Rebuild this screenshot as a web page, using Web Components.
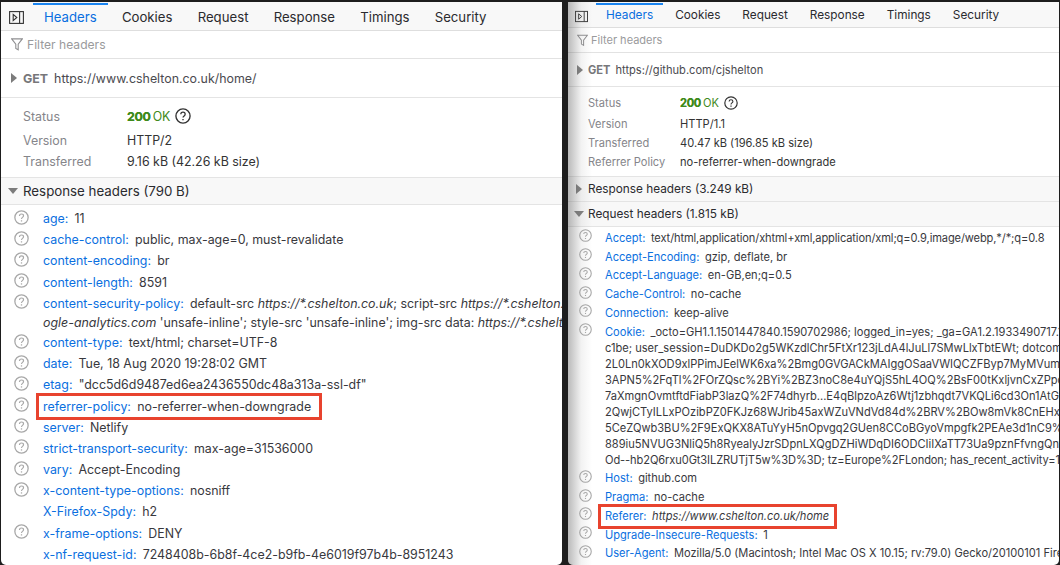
<!DOCTYPE html>
<html>
<head>
<meta charset="utf-8">
<title>Network headers</title>
<style>
  html, body { margin: 0; height: 100%; overflow: hidden; background: #1d1d1d; }
  body { font-family: Inter, "Liberation Sans", sans-serif; }
  #page { display: flex; height: 565px; padding: 2px 1px 0 1px; box-sizing: border-box; gap: 6px; }
  #left {
    flex: 0 0 561px;
    --fs: 12.4px; --tab-fs: 13.2px; --tab-gap: 25.2px; --tab-pad: 11px; --tab-h: 28px; --tab-top: 2px; --tabs-left: 32px; --toggle-w: 15px; --toggle-left: 8px;
    --filter-h: 27px; --filter-pad: 10px; --filter-gap: 4px; --filter-fs: 12.1px; --funnel: 12px;
    --req-h: 38px; --req-pad: 10px; --tri-gap: 6px; --method-gap: 6px;
    --status-pad: 4.5px 0 5.5px 22px; --label-w: 104px; --status-first: 27px; --status-row: 21px; --ok-gap: 2px; --help-gap: 5px;
    --head-h: 27px; --head-pad: 7px; --head-gap: 5px; --head-fs: 13.3px;
    --row-h: 21.2px; --line-h: 18px; --icon: 15px; --icon-left: 13px; --name-left: 42px; --rows-top: 3px;
  }
  #right {
    flex: 1; min-width: 0;
    --fs: 11.1px; --tab-fs: 11.8px; --tab-gap: 22px; --tab-pad: 10px; --tab-h: 25px; --tab-top: 1px; --tabs-left: 28px; --toggle-w: 13px; --toggle-left: 7px;
    --filter-h: 24px; --filter-pad: 9px; --filter-gap: 3px; --filter-fs: 11px; --funnel: 11px;
    --req-h: 33px; --req-pad: 9px; --tri-gap: 5px; --method-gap: 5px;
    --status-pad: 5px 0 4px 20px; --label-w: 92px; --status-first: 22px; --status-row: 19.3px; --ok-gap: 2px; --help-gap: 5px;
    --head-h: 25px; --head-pad: 6px; --head-gap: 4px; --head-fs: 11.8px;
    --row-h: 18.75px; --line-h: 16px; --icon: 13px; --icon-left: 11px; --name-left: 37px; --rows-top: 2px;
  }
  i { font-style: italic; }
</style>
</head>
<body>
<div id="page">
  <net-panel id="left">
    <panel-tabs></panel-tabs>
    <panel-filter></panel-filter>
    <request-line method="GET">https://www.cshelton.co.uk/home/</request-line>
    <status-block>
      <status-row label="Status" code="200">OK</status-row>
      <status-row label="Version">HTTP/2</status-row>
      <status-row label="Transferred">9.16 kB (42.26 kB size)</status-row>
    </status-block>
    <section-head open>Response headers (790 B)</section-head>
    <header-list>
      <header-row name="age">11</header-row>
      <header-row name="cache-control">public, max-age=0, must-revalidate</header-row>
      <header-row name="content-encoding">br</header-row>
      <header-row name="content-length">8591</header-row>
      <header-row name="content-security-policy">default-src <i>https://*.cshelton.co.uk</i>; script-src <i>https://*.cshelton.co.uk</i><span slot="more"><i>ogle-analytics.com</i> 'unsafe-inline'; style-src 'unsafe-inline'; img-src data: <i>https://*.cshelton.co.uk</i></span></header-row>
      <header-row name="content-type">text/html; charset=UTF-8</header-row>
      <header-row name="date">Tue, 18 Aug 2020 19:28:02 GMT</header-row>
      <header-row name="etag">"dcc5d6d9487ed6ea2436550dc48a313a-ssl-df"</header-row>
      <header-row name="referrer-policy" marked style="--mark-w: 286px">no-referrer-when-downgrade</header-row>
      <header-row name="server">Netlify</header-row>
      <header-row name="strict-transport-security">max-age=31536000</header-row>
      <header-row name="vary">Accept-Encoding</header-row>
      <header-row name="x-content-type-options">nosniff</header-row>
      <header-row name="X-Firefox-Spdy" noicon>h2</header-row>
      <header-row name="x-frame-options">DENY</header-row>
      <header-row name="x-nf-request-id" noicon>7248408b-6b8f-4ce2-b9fb-4e6019f97b4b-8951243</header-row>
    </header-list>
  </net-panel>

  <net-panel id="right" shaded>
    <panel-tabs></panel-tabs>
    <panel-filter></panel-filter>
    <request-line method="GET">https://github.com/cjshelton</request-line>
    <status-block>
      <status-row label="Status" code="200">OK</status-row>
      <status-row label="Version">HTTP/1.1</status-row>
      <status-row label="Transferred">40.47 kB (196.85 kB size)</status-row>
      <status-row label="Referrer Policy">no-referrer-when-downgrade</status-row>
    </status-block>
    <section-head>Response headers (3.249 kB)</section-head>
    <section-head open>Request headers (1.815 kB)</section-head>
    <header-list>
      <header-row name="Accept"><span style="letter-spacing: -.12px">text/html,application/xhtml+xml,application/xml;q=0.9,image/webp,*/*;q=0.8</span></header-row>
      <header-row name="Accept-Encoding">gzip, deflate, br</header-row>
      <header-row name="Accept-Language">en-GB,en;q=0.5</header-row>
      <header-row name="Cache-Control">no-cache</header-row>
      <header-row name="Connection">keep-alive</header-row>
      <header-row name="Cookie">_octo=GH1.1.1501447840.1590702986; logged_in=yes; _ga=GA1.2.1933490717.1590702986
        <span slot="more" style="margin-top: -1.5px">c1be; user_session=DuDKDo2g5WKzdlChr5FtXr123jLdA4lJuLl7SMwLlxTbtEWt; dotcom_user=cjshelton</span>
        <span slot="more">2L0Ln0kXOD9xlPPimJEelWK6xa%2Bmg0GVGACkMAIggOSaaVWIQCZFByp7MyMVum%2F</span>
        <span slot="more">3APN5%2FqTl%2FOrZQsc%2BYi%2BZ3noC8e4uYQjS5hL4OQ%2BsF00tKxljvnCxZPpde9</span>
        <span slot="more">7aXmgnOvmtftdFiabP3lazQ%2F74dhyrb...E4qBlpzoAz6Wtj1zbhqdt7VKQLi6cd3On1AtG1</span>
        <span slot="more">2QwjCTyILLxPOzibPZ0FKJz68WJrib45axWZuVNdVd84d%2BRV%2BOw8mVk8CnEHx94</span>
        <span slot="more">5CeZQwb3BU%2F9ExQKX8ATuYyH5nOpvgq2GUen8CCoBGyoVmpgfk2PEAe3d1nC9%2F</span>
        <span slot="more">889iu5NVUG3NliQ5h8RyealyJzrSDpnLXQgDZHiWDqDI6ODCIiIXaTT73Ua9pznFfvngQnv</span>
        <span slot="more" style="margin-bottom: 1.5px; letter-spacing: -.1px">Od--hb2Q6rxu0Gt3ILZRUTjT5w%3D%3D; tz=Europe%2FLondon; has_recent_activity=1</span>
      </header-row>
      <header-row name="Host">github.com</header-row>
      <header-row name="Pragma">no-cache</header-row>
      <header-row name="Referer" marked style="--mark-w: 239px"><i>https://www.cshelton.co.uk/home</i></header-row>
      <header-row name="Upgrade-Insecure-Requests">1</header-row>
      <header-row name="User-Agent">Mozilla/5.0 (Macintosh; Intel Mac OS X 10.15; rv:79.0) Gecko/20100101 Firefox/79.0</header-row>
    </header-list>
  </net-panel>
</div>

<script>
  const HELP_ICON = `<svg viewBox="0 0 14 14" fill="none" stroke="currentColor">
    <circle cx="7" cy="7" r="6.2" stroke-width="1.2"/>
    <path d="M5.1 5.5c0-1.1.8-1.8 1.9-1.8s1.9.7 1.9 1.7c0 1.5-1.9 1.5-1.9 3" stroke-width="1.1"/>
    <path d="M7 9.6v1.2" stroke-width="1.2"/>
  </svg>`;

  class NetPanel extends HTMLElement {
    constructor() {
      super();
      this.attachShadow({ mode: "open" }).innerHTML = `
        <style>
          :host {
            display: flex; flex-direction: column; position: relative; overflow: hidden;
            background: #fff; color: #2a2a2e; font-size: var(--fs);
            border-radius: 0 0 5px 5px; height: 563px;
          }
          :host([shaded])::before {
            content: ""; position: absolute; left: 0; top: 0; bottom: 0; width: 24px; z-index: 3;
            background: linear-gradient(90deg, rgba(90,90,90,.42), rgba(150,150,150,.12) 55%, rgba(255,255,255,0));
            pointer-events: none;
          }
        </style>
        <slot></slot>`;
    }
  }

  class PanelTabs extends HTMLElement {
    constructor() {
      super();
      const tabs = ["Headers", "Cookies", "Request", "Response", "Timings", "Security"];
      this.attachShadow({ mode: "open" }).innerHTML = `
        <style>
          :host {
            display: flex; flex: none; align-items: stretch; box-sizing: border-box; height: calc(var(--tab-h) + 1px);
            background: #f8f8f8; border-bottom: 1px solid #dedede; position: relative;
            padding-left: var(--tabs-left); font-size: var(--tab-fs);
          }
          svg { position: absolute; left: var(--toggle-left); top: 50%; margin-top: -5px; width: var(--toggle-w); height: 13px; color: #333; }
          .tab { display: flex; align-items: center; padding: var(--tab-top) var(--tab-pad) 0; margin-right: calc(var(--tab-gap) - 2 * var(--tab-pad)); color: #2a2a2e; white-space: nowrap; }
          .tab.on { color: #0a6fe0; background: linear-gradient(#f8f8f8 1px, #1a84f0 1px 3px, #f8f8f8 3px); }
        </style>
        <svg viewBox="0 0 15 13" fill="none" stroke="currentColor" stroke-width="1.1">
          <rect x=".6" y=".6" width="13.8" height="11.8"/>
          <path d="M10.6.6v11.8"/>
          <path d="M4.2 3.4l3.6 3.1-3.6 3.1z"/>
        </svg>
        ${tabs.map((t, i) => `<div class="tab${i === 0 ? " on" : ""}">${t}</div>`).join("")}`;
    }
  }

  class PanelFilter extends HTMLElement {
    constructor() {
      super();
      this.attachShadow({ mode: "open" }).innerHTML = `
        <style>
          :host {
            display: flex; flex: none; align-items: center; gap: var(--filter-gap); box-sizing: border-box;
            height: calc(var(--filter-h) + 1px); padding-left: var(--filter-pad); color: #9a9a9c;
            border-bottom: 1px solid #e2e2e2; font-size: var(--filter-fs);
          }
          svg { width: var(--funnel); height: 13px; flex: none; color: #8f8f91; }
        </style>
        <svg viewBox="0 0 12 13" fill="none" stroke="currentColor" stroke-width="1.1">
          <path d="M.7.9h10.6L7.2 6.2v5.6L4.8 10.4V6.2z"/>
        </svg>
        <span>Filter headers</span>`;
    }
  }

  class RequestLine extends HTMLElement {
    constructor() {
      super();
      this.attachShadow({ mode: "open" }).innerHTML = `
        <style>
          :host {
            display: flex; flex: none; align-items: center; box-sizing: border-box;
            height: calc(var(--req-h) + 1px); padding-left: var(--req-pad); color: #4a4a4f;
            border-bottom: 1px solid #e4e4e4;
          }
          .tri { width: 0; height: 0; border: 5px solid transparent; border-left: 6px solid #7c7c7c; border-right: 0; margin-right: var(--tri-gap); }
          b { color: #77777a; margin-right: var(--method-gap); }
        </style>
        <span class="tri"></span><b></b><slot></slot>`;
      this.shadowRoot.querySelector("b").textContent = this.getAttribute("method");
    }
  }

  class StatusBlock extends HTMLElement {
    constructor() {
      super();
      this.attachShadow({ mode: "open" }).innerHTML = `
        <style>
          :host { display: block; flex: none; padding: var(--status-pad); }
        </style>
        <slot></slot>`;
    }
  }

  class StatusRow extends HTMLElement {
    constructor() {
      super();
      const code = this.getAttribute("code");
      this.attachShadow({ mode: "open" }).innerHTML = `
        <style>
          :host { display: flex; align-items: center; height: var(--status-row); color: #333; white-space: nowrap; }
          :host([code]) { height: var(--status-first); }
          .label { flex: none; width: var(--label-w); color: #85858a; }
          .ok { color: #3f8a1c; display: flex; align-items: center; }
          b { margin-right: var(--ok-gap); letter-spacing: -.3px; text-shadow: 0 0 .5px #3f8a1c; }
          svg { width: calc(var(--icon) + 1px); height: calc(var(--icon) + 1px); margin-left: var(--help-gap); color: #333; }
        </style>
        <span class="label">${this.getAttribute("label")}</span>
        ${code
          ? `<span class="ok"><b>${code}</b><slot></slot>${HELP_ICON}</span>`
          : `<slot></slot>`}`;
    }
  }

  class SectionHead extends HTMLElement {
    constructor() {
      super();
      this.attachShadow({ mode: "open" }).innerHTML = `
        <style>
          :host {
            display: flex; flex: none; align-items: center; box-sizing: border-box;
            height: calc(var(--head-h) + 1px); padding-left: var(--head-pad); gap: var(--head-gap);
            background: #f8f8f8; border-top: 1px solid #e4e4e4; border-bottom: 1px solid #e4e4e4;
            color: #2a2a2e; margin-bottom: -1px; font-size: var(--head-fs);
          }
          .tri { flex: none; width: 10px; display: flex; justify-content: center; }
          .tri::before { content: ""; border: 5px solid transparent; border-left: 6px solid #7c7c7c; border-right: 0; }
          :host([open]) .tri::before { border: 5px solid transparent; border-top: 6px solid #7c7c7c; border-bottom: 0; }
        </style>
        <span class="tri"></span><slot></slot>`;
    }
  }

  class HeaderList extends HTMLElement {
    constructor() {
      super();
      this.attachShadow({ mode: "open" }).innerHTML = `
        <style>
          :host { display: block; flex: 1; min-height: 0; overflow: hidden; padding-top: calc(var(--rows-top) + 1px); }
        </style>
        <slot></slot>`;
    }
  }

  class HeaderRow extends HTMLElement {
    constructor() {
      super();
      const icon = this.hasAttribute("noicon") ? "" : HELP_ICON;
      this.attachShadow({ mode: "open" }).innerHTML = `
        <style>
          :host { display: block; position: relative; padding-left: var(--name-left); white-space: nowrap; color: #38383d; }
          .line { height: var(--row-h); line-height: var(--row-h); }
          .icon { position: absolute; left: var(--icon-left); top: calc(var(--row-h) / 2); margin-top: -9px; width: var(--icon); height: var(--icon); color: #a8a8a8; }
          .icon svg { display: block; width: 100%; height: 100%; }
          .name { color: #0a6fe0; margin-right: .5em; }
          ::slotted([slot="more"]) { display: block; height: var(--line-h); line-height: var(--line-h); }
          /* only the reference's red annotation lies over the row */
          :host([marked])::after {
            content: ""; position: absolute; left: calc(var(--name-left) - 7px); top: -3px; bottom: -3px; width: var(--mark-w);
            border: 3px solid #e8432e; box-sizing: border-box; pointer-events: none;
          }
        </style>
        <span class="icon">${icon}</span>
        <div class="line"><span class="name"></span><slot></slot></div>
        <slot name="more"></slot>`;
      this.shadowRoot.querySelector(".name").textContent = this.getAttribute("name") + ":";
    }
  }

  customElements.define("net-panel", NetPanel);
  customElements.define("panel-tabs", PanelTabs);
  customElements.define("panel-filter", PanelFilter);
  customElements.define("request-line", RequestLine);
  customElements.define("status-block", StatusBlock);
  customElements.define("status-row", StatusRow);
  customElements.define("section-head", SectionHead);
  customElements.define("header-list", HeaderList);
  customElements.define("header-row", HeaderRow);
</script>
</body>
</html>
